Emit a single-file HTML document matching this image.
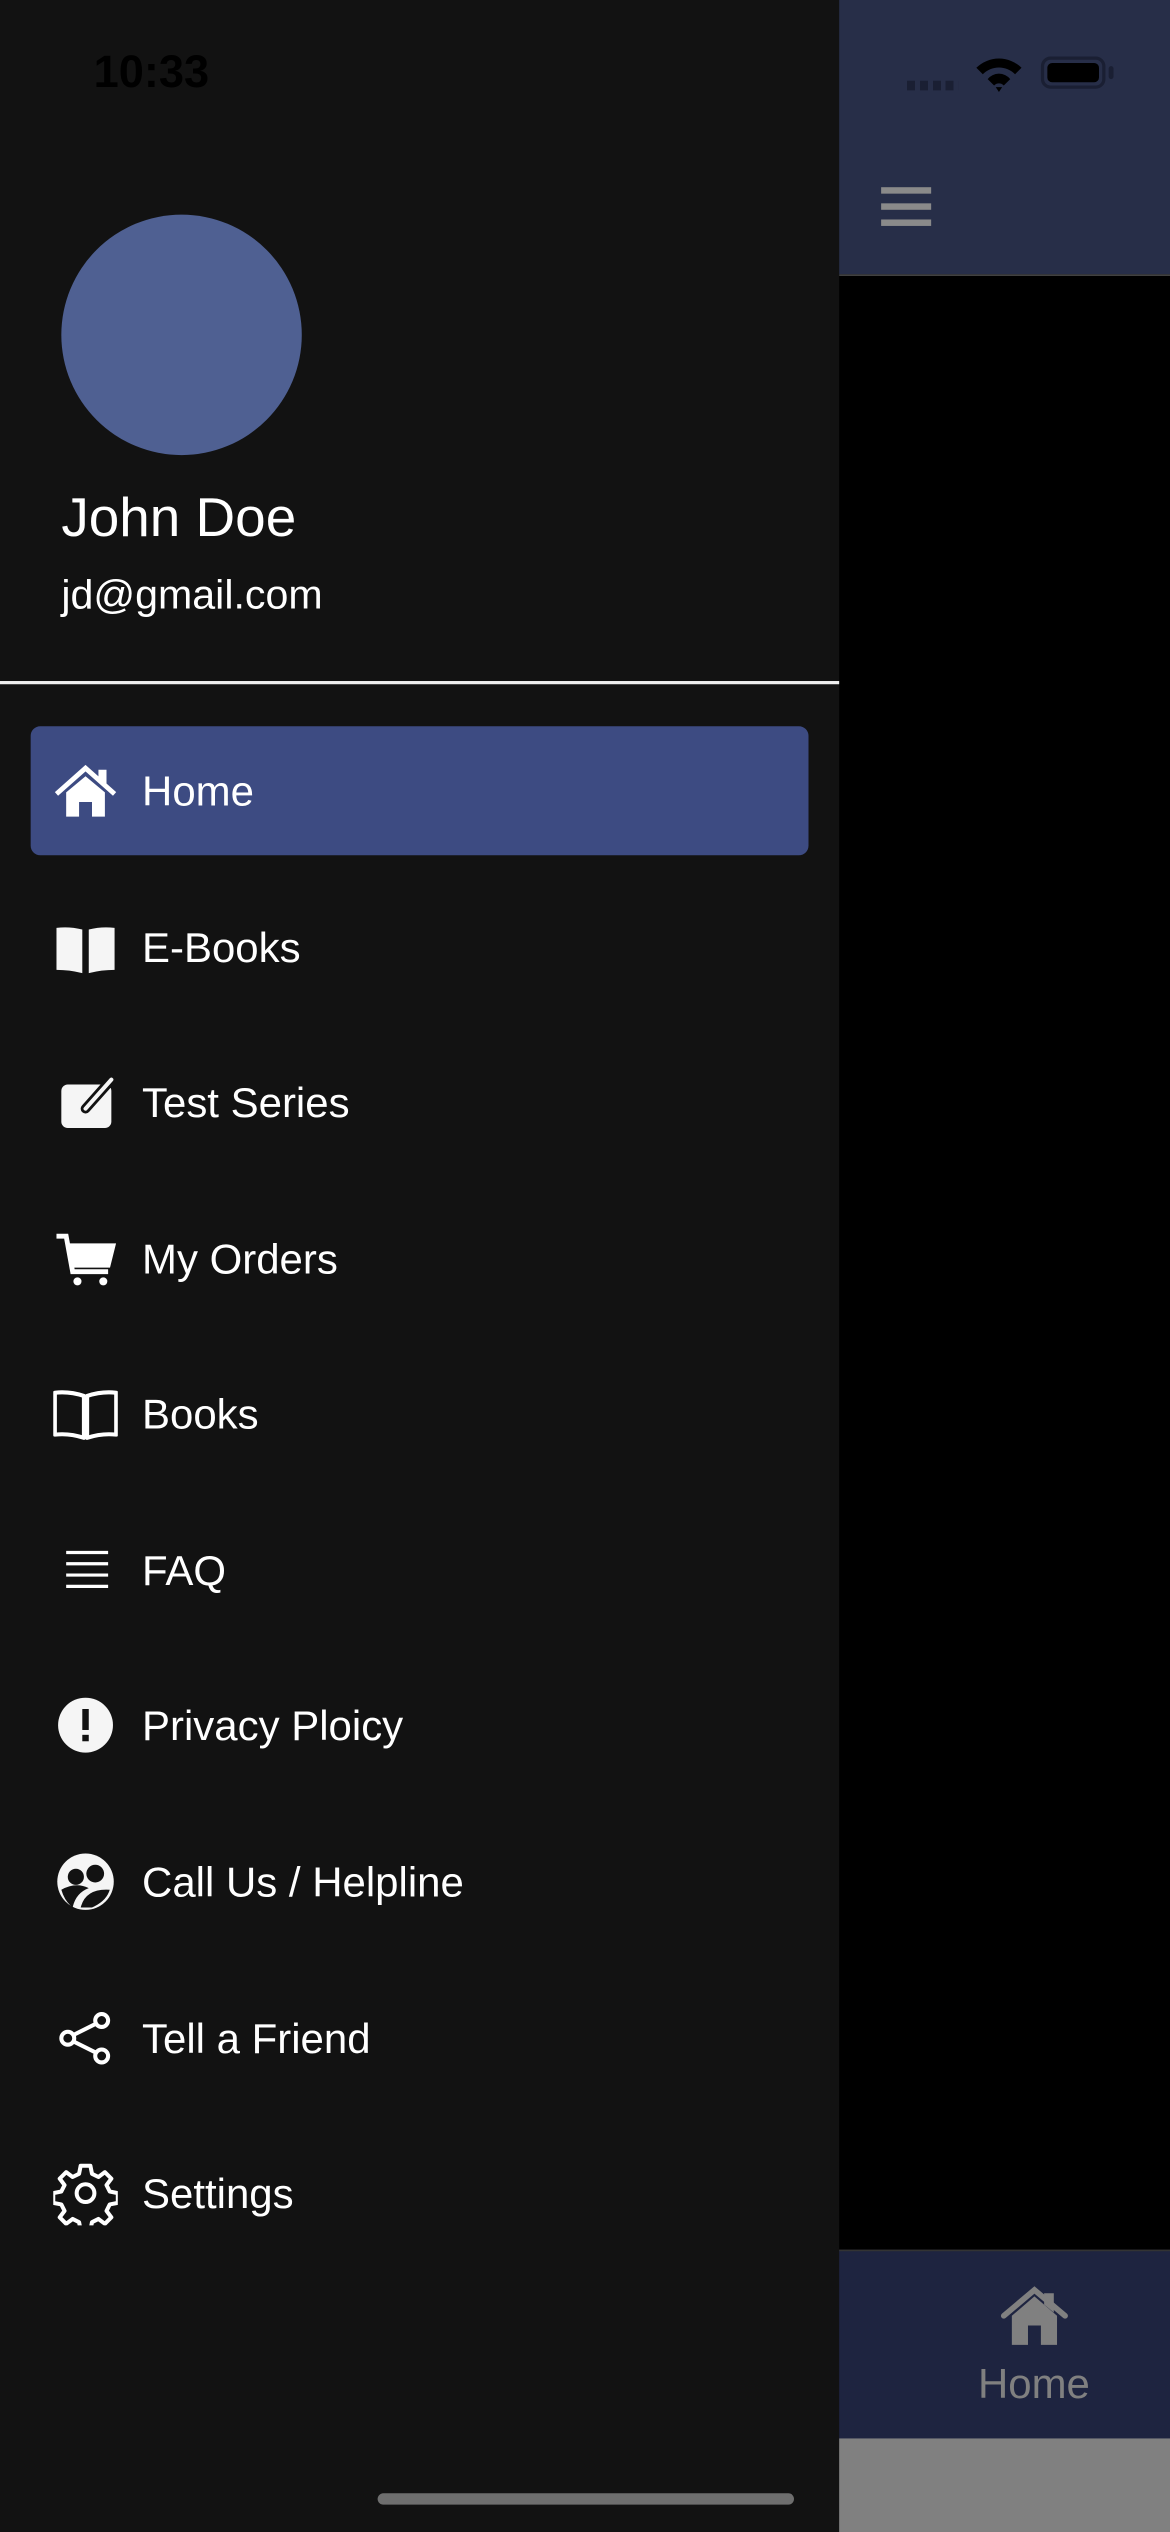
<!DOCTYPE html>
<html><head><meta charset="utf-8"><style>
html,body{margin:0;padding:0;background:#121212;}
body{width:1170px;height:2532px;overflow:hidden;position:relative;}
#s{position:absolute;left:0;top:0;width:725px;height:1569px;transform:scale(1.61379);transform-origin:0 0;font-family:"Liberation Sans",sans-serif;}
.a{position:absolute;}
.item{position:absolute;left:19px;width:482px;height:80px;}
.item .t{position:absolute;left:69px;top:50%;transform:translateY(-48%);color:#fff;font-size:26px;white-space:nowrap;}
.item svg{position:absolute;left:14px;top:20px;width:40px;height:40px;}
</style></head><body><div id="s">
<div class="a" style="left:0;top:0;width:520px;height:1569px;background:#121212"></div>
<div class="a" style="left:520px;top:0;width:205px;height:170px;background:#272e48"></div>
<div class="a" style="left:520px;top:170px;width:205px;height:1224px;background:#000;border-top:1px solid #444"></div>
<div class="a" style="left:520px;top:1394px;width:205px;height:117px;background:#1e2440;border-top:1px solid #333"></div>
<div class="a" style="left:520px;top:1511px;width:205px;height:58px;background:#808080"></div>
<div class="a" style="left:58px;top:29px;font-size:28px;color:#000;font-weight:bold">10:33</div>
<div class="a" style="left:562px;top:50px;width:32px;height:6px;background:repeating-linear-gradient(90deg,#1a1f33 0 5px,transparent 5px 8px)"></div>
<svg class="a" style="left:603px;top:34px" width="32" height="24" viewBox="0 0 32 24"><path d="M2 8 A20 20 0 0 1 30 8 L26 12 A14 14 0 0 0 6 12Z M9 15 A9 9 0 0 1 23 15 L19 19 A4 4 0 0 0 13 19Z M14 20 L18 20 L16 23Z" fill="#000"/></svg>
<div class="a" style="left:645px;top:35px;width:40px;height:20px;border:2px solid #1a1f33;border-radius:6px;box-sizing:border-box;padding:2px"><div style="width:100%;height:100%;background:#000;border-radius:3px"></div></div>
<div class="a" style="left:687px;top:41px;width:3px;height:8px;background:#1a1f33;border-radius:2px"></div>
<div class="a" style="left:546px;top:116px;width:31px;height:4px;background:#8a8a8a"></div>
<div class="a" style="left:546px;top:126px;width:31px;height:4px;background:#8a8a8a"></div>
<div class="a" style="left:546px;top:136px;width:31px;height:4px;background:#8a8a8a"></div>
<div class="a" style="left:38px;top:133px;width:149px;height:149px;border-radius:50%;background:#4f6092"></div>
<div class="a" style="left:38px;top:302px;font-size:34px;color:#fff">John Doe</div>
<div class="a" style="left:38px;top:355px;font-size:25.5px;color:#fff">jd@gmail.com</div>
<div class="a" style="left:0;top:422px;width:520px;height:1.5px;background:#eee"></div>
<div class="item" style="top:450px;background:#3d4b82;border-radius:6px"><svg viewBox="0 0 40 40"><path d="M2 22 L20 6 L38 22" stroke="#fff" stroke-width="3" fill="none"/><path d="M28 7h5v10l-5-4Z M8 21 L20 11 L32 21 V36 H24 V27 H16 V36 H8Z" fill="#fff"/></svg><span class="t">Home</span></div>
<div class="item" style="top:547px"><svg viewBox="0 0 40 40"><path d="M2 8 Q10 7 18 9 V36 Q10 34 2 34Z M22 9 Q30 7 38 8 V34 Q30 34 22 36Z" fill="#f5f5f5"/></svg><span class="t">E-Books</span></div>
<div class="item" style="top:643px"><svg viewBox="0 0 40 40"><rect x="5" y="9" width="31" height="27" rx="4" fill="#f5f5f5"/><path d="M20 24 L36 6" stroke="#121212" stroke-width="6" stroke-linecap="round"/><path d="M20 24 L36 6" stroke="#f5f5f5" stroke-width="2.5" stroke-linecap="round"/></svg><span class="t">Test Series</span></div>
<div class="item" style="top:740px"><svg viewBox="0 0 40 40"><path d="M2 6 H8 L12 28 H34 M10 12 H37 L34 24 H12" stroke="#fff" stroke-width="3" fill="none"/><path d="M10 12 H37 L34 24 H12Z" fill="#fff"/><circle cx="15" cy="34" r="2.5" fill="#fff"/><circle cx="31" cy="34" r="2.5" fill="#fff"/></svg><span class="t">My Orders</span></div>
<div class="item" style="top:836px"><svg viewBox="0 0 40 40"><path d="M1 7 Q10 6 19 9 V35 Q10 32 1 33Z M21 9 Q30 6 39 7 V33 Q30 32 21 35Z" stroke="#fff" stroke-width="2.5" fill="none" stroke-linejoin="round"/></svg><span class="t">Books</span></div>
<div class="item" style="top:933px"><svg viewBox="0 0 40 40"><path d="M8 9H34M8 16H34M8 23H34M8 30H34" stroke="#fff" stroke-width="2"/></svg><span class="t">FAQ</span></div>
<div class="item" style="top:1029px"><svg viewBox="0 0 40 40"><circle cx="20" cy="20" r="17" fill="#f5f5f5"/><rect x="18" y="10" width="4" height="13" fill="#121212"/><rect x="18" y="26" width="4" height="4" fill="#121212"/></svg><span class="t">Privacy Ploicy</span></div>
<div class="item" style="top:1126px"><svg viewBox="0 0 40 40"><circle cx="20" cy="20" r="17.5" fill="#f5f5f5"/><circle cx="14" cy="17" r="5" fill="#121212"/><circle cx="26" cy="15" r="5.5" fill="#121212"/><path d="M5 25 Q14 20 22 24 Q14 27 12 36 Q7 32 5 25Z M17 36 Q20 24 35 25 Q33 32 24 36Z" fill="#121212"/></svg><span class="t">Call Us / Helpline</span></div>
<div class="item" style="top:1223px"><svg viewBox="0 0 40 40"><circle cx="9" cy="20" r="4" stroke="#fff" stroke-width="2.5" fill="none"/><circle cx="30" cy="9" r="4" stroke="#fff" stroke-width="2.5" fill="none"/><circle cx="30" cy="31" r="4" stroke="#fff" stroke-width="2.5" fill="none"/><path d="M12.5 18 L26.5 11 M12.5 22 L26.5 29" stroke="#fff" stroke-width="2.5"/></svg><span class="t">Tell a Friend</span></div>
<div class="item" style="top:1319px"><svg viewBox="0 0 40 40"><path d="M17 3h6l1 5 4 2 4-3 4 4-3 4 2 4 5 1v6l-5 1-2 4 3 4-4 4-4-3-4 2-1 5h-6l-1-5-4-2-4 3-4-4 3-4-2-4-5-1v-6l5-1 2-4-3-4 4-4 4 3 4-2Z" stroke="#fff" stroke-width="2.5" fill="none" stroke-linejoin="round"/><circle cx="20" cy="20" r="5.5" stroke="#fff" stroke-width="2.5" fill="none"/></svg><span class="t">Settings</span></div>
<svg class="a" style="left:620px;top:1416px" width="42" height="40" viewBox="0 0 42 40"><path d="M2 19 L21 3 L40 19" stroke="#808080" stroke-width="3.5" fill="none" stroke-linecap="round"/><path d="M27 5h6v12l-6-5Z M7 19 L21 7 L35 19 V37 H25 V25 H17 V37 H7Z" fill="#808080"/></svg>
<div class="a" style="left:606px;top:1462px;font-size:26px;color:#808080">Home</div>
<div class="a" style="left:234px;top:1545px;width:258px;height:7px;border-radius:4px;background:#6e6e6e"></div>
</div></body></html>
